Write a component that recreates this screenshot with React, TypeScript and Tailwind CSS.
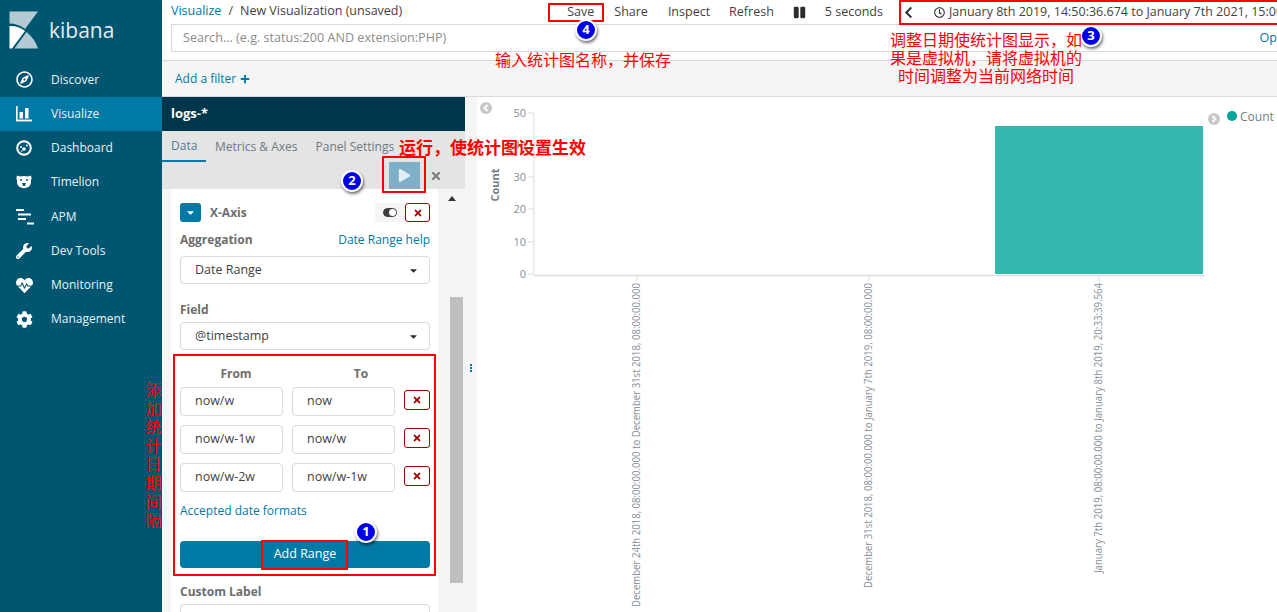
import { FaRegCompass, FaRegClock, FaWrench, FaHeartbeat, FaCog, FaPlay, FaTimes, FaCaretDown, FaChevronLeft, FaPause, FaPlus } from "react-icons/fa";

function VisualizeIcon() {
  return (
    <svg width="16" height="16" viewBox="0 0 16 16" fill="white">
      <rect x="0" y="0" width="1.6" height="15" />
      <rect x="0" y="13.6" width="16" height="1.8" />
      <rect x="3.5" y="6" width="3.5" height="6.5" />
      <rect x="9" y="2" width="3.5" height="10.5" />
    </svg>
  );
}

function DashboardIcon() {
  return (
    <svg width="16" height="16" viewBox="0 0 16 16" fill="white">
      <circle cx="8" cy="8" r="6.8" fill="none" stroke="white" strokeWidth="2" />
      <circle cx="8" cy="9" r="1.8" />
      <circle cx="5" cy="7" r="1" />
      <circle cx="10.8" cy="5.5" r="1" />
      <circle cx="5.8" cy="11" r="0.8" />
    </svg>
  );
}

function TimelionIcon() {
  return (
    <svg width="16" height="14" viewBox="0 0 16 14">
      <path d="M1.5 0.5 L4 1.5 Q8 0.5 12 1.5 L14.5 0.5 Q16.5 2.5 15 5 Q15.5 11 11 12.5 Q8 14 5 12.5 Q0.5 11 1 5 Q-0.5 2.5 1.5 0.5 Z" fill="white" />
      <circle cx="5" cy="5" r="1" fill="#005571" />
      <circle cx="11" cy="5" r="1" fill="#005571" />
      <path d="M6 8 H10 L9 11 H7 Z" fill="#005571" />
    </svg>
  );
}

function ApmIcon() {
  return (
    <svg width="18" height="16" viewBox="0 0 18 16" fill="white">
      <rect x="0" y="0" width="8" height="2" />
      <rect x="2" y="4.5" width="13" height="2" />
      <rect x="2" y="9" width="8" height="2" />
      <rect x="11" y="13.5" width="7" height="2" />
    </svg>
  );
}

function LogoMark() {
  return (
    <svg width="30" height="38" viewBox="0 0 30 38" className="shrink-0">
      <path d="M0.5 0.5 H29 L16 18 Q9 12.5 0.5 12.5 Z" fill="#b4cbd3" />
      <path d="M0.5 15 Q9 14.5 16 20 L3 37.5 H0.5 Z" fill="#ffffff" />
      <path d="M17.5 21 Q26 28 29 37.5 H5.5 Z" fill="#b4cbd3" />
    </svg>
  );
}

const navItems = [
  { name: "Discover", icon: <FaRegCompass size={17} color="white" /> },
  { name: "Visualize", icon: <VisualizeIcon />, active: true },
  { name: "Dashboard", icon: <DashboardIcon /> },
  { name: "Timelion", icon: <TimelionIcon /> },
  { name: "APM", icon: <ApmIcon /> },
  { name: "Dev Tools", icon: <FaWrench size={16} color="white" /> },
  { name: "Monitoring", icon: <FaHeartbeat size={17} color="white" /> },
  { name: "Management", icon: <FaCog size={17} color="white" /> },
];

function Sidebar() {
  return (
    <aside className="w-[162px] shrink-0 h-full bg-[#005571] text-white">
      <div className="h-[62.8px] pl-[9px] pt-[11px] flex items-start gap-[10px]">
        <LogoMark />
        <span className="text-[21px] leading-[38px] text-[#e6eef1]">kibana</span>
      </div>
      {navItems.map((item) => (
        <div
          key={item.name}
          className={`h-[34.2px] flex items-center text-[12px] ${item.active ? "bg-[#0079a5]" : ""}`}
        >
          <span className="w-[51px] pl-[16px] shrink-0 flex items-center">{item.icon}</span>
          <span className="text-[#e9f2f5]">{item.name}</span>
        </div>
      ))}
    </aside>
  );
}

function TopBar() {
  return (
    <div className="h-[97px] shrink-0 flex flex-col border-b border-[#d9d9d9]">
      <div className="h-[24px] flex items-center pl-[9px] text-[12.5px] text-[#3f3f3f] whitespace-nowrap overflow-hidden">
        <div className="flex items-center shrink-0 mb-[1px]">
          <span className="text-[#0079a5]">Visualize</span>
          <span className="mx-[7px]">/</span>
          <span>New Visualization (unsaved)</span>
        </div>
        <div className="flex items-center shrink-0 mt-[1px] ml-[165px]">
          <span>Save</span>
          <span className="ml-[20px]">Share</span>
          <span className="ml-[20px]">Inspect</span>
          <span className="ml-[19px]">Refresh</span>
          <FaPause size={13} className="ml-[19px] text-[#2d2d2d] shrink-0" />
          <span className="ml-[19px]">5 seconds</span>
          <FaChevronLeft size={13} className="ml-[19px] text-[#2d2d2d] shrink-0" />
          <FaRegClock size={11} className="ml-[19px] text-[#2d2d2d] shrink-0" />
          <span className="ml-[4px]">January 8th 2019, 14:50:36.674 to January 7th 2021, 15:00:00.000</span>
        </div>
      </div>
      <div className="h-[28px] ml-[9px] -mr-[2px] border border-[#d9d9d9] flex items-center pl-[11px] pr-[1px] text-[12.6px] text-[#8c8c8c] justify-between whitespace-nowrap">
        <span>Search... (e.g. status:200 AND extension:PHP)</span>
        <span className="text-[#0079a5]">Op</span>
      </div>
      <div className="h-[8px] shrink-0"></div>
      <div className="flex-1 bg-[#f5f5f5] border-t border-[#d9d9d9] flex items-center pl-[13px] text-[12px] text-[#0079a5] gap-[4px]">
        <span>Add a filter</span>
        <FaPlus size={10} />
      </div>
    </div>
  );
}

function DangerButton({ className }: { className: string }) {
  return (
    <span className={`flex items-center justify-center bg-white border border-[#a30000] rounded-[3px] text-[#a30000] shrink-0 ${className}`}>
      <FaTimes size={10} />
    </span>
  );
}

function SelectBox({ label }: { label: string }) {
  return (
    <div className="h-[28px] border border-[#d9d9d9] rounded-[4px] flex items-center justify-between pl-[14px] pr-[10px] text-[12.5px] text-[#3f3f3f]">
      <span>{label}</span>
      <FaCaretDown size={11} className="text-[#2d2d2d]" />
    </div>
  );
}

function RangeInput({ value }: { value: string }) {
  return (
    <div className="w-[103px] h-[29px] border border-[#d9d9d9] rounded-[4px] flex items-center pl-[14px] text-[12.5px] text-[#3f3f3f] shrink-0">
      {value}
    </div>
  );
}

const ranges = [
  ["now/w", "now"],
  ["now/w-1w", "now/w"],
  ["now/w-2w", "now/w-1w"],
];

function EditorPanel() {
  return (
    <div className="w-[303px] shrink-0 h-full flex flex-col">
      <div className="h-[34px] shrink-0 bg-[#00364b] text-white font-bold text-[13px] flex items-center pl-[9px]">logs-*</div>
      <div className="h-[31px] shrink-0 bg-[#e4e4e4] flex items-end text-[12px] text-[#6f7a80] whitespace-nowrap">
        <span className="w-[44px] h-[31px] pl-[9px] pt-[1px] flex items-center border-b-2 border-[#0079a5] text-[#4d7f92]">Data</span>
        <span className="h-[31px] pt-[1px] ml-[9px] flex items-center">Metrics &amp; Axes</span>
        <span className="h-[31px] pt-[1px] ml-[18px] flex items-center">Panel Settings</span>
      </div>
      <div className="h-[27px] shrink-0 bg-[#e4e4e4] flex items-stretch justify-end pr-[14px]">
        <span className="w-[31px] bg-[#7eb0c7] flex items-center justify-center text-white">
          <FaPlay size={13} className="text-[#e3eff4]" />
        </span>
        <span className="w-[31px] flex items-center justify-center text-[#7f7f7f]">
          <FaTimes size={12} />
        </span>
      </div>
      <div className="flex-1 min-h-0 bg-[#f5f5f5] flex">
        <div className="w-[267px] ml-[9px] h-full bg-white pl-[9px] pr-[8px] pt-[14px] shrink-0">
          <div className="h-[19px] flex items-center">
            <span className="w-[21px] h-[19px] rounded-[3px] bg-[#0079a5] flex items-center justify-center text-white">
              <FaCaretDown size={11} />
            </span>
            <span className="ml-[9px] text-[12px] font-bold text-[#6d6d6d]">X-Axis</span>
            <span className="ml-auto w-[30px] h-[19px] bg-[#f5f5f5] rounded-l-[3px] flex items-center justify-center">
              <span className="w-[14px] h-[9px] rounded-full border border-[#3f3f3f] bg-[#3f3f3f] flex justify-end">
                <span className="w-[7px] h-[7px] rounded-full bg-white"></span>
              </span>
            </span>
            <DangerButton className="w-[25px] h-[19px]" />
          </div>
          <div className="mt-[10px] h-[16px] flex justify-between items-center text-[12px] whitespace-nowrap">
            <span className="font-bold text-[#6d6d6d]">Aggregation</span>
            <span className="text-[#0079a5]">Date Range help</span>
          </div>
          <div className="mt-[8px]">
            <SelectBox label="Date Range" />
          </div>
          <div className="mt-[18px] h-[16px] flex items-center text-[12px] font-bold text-[#6d6d6d]">Field</div>
          <div className="mt-[4px]">
            <SelectBox label="@timestamp" />
          </div>
          <div className="mt-[16px] flex text-[12px] font-bold text-[#6d6d6d] h-[16px] items-center">
            <span className="w-[112px] text-center">From</span>
            <span className="w-[138px] text-center">To</span>
          </div>
          <div className="mt-[5px] flex flex-col gap-[9px]">
            {ranges.map(([from, to]) => (
              <div key={from} className="flex items-start">
                <RangeInput value={from} />
                <span className="ml-[9px]">
                  <RangeInput value={to} />
                </span>
                <DangerButton className="w-[26px] h-[20px] ml-[9px] mt-[3px]" />
              </div>
            ))}
          </div>
          <div className="mt-[11px] h-[16px] flex items-center text-[12px] text-[#0079a5]">Accepted date formats</div>
          <div className="mt-[22px] h-[27px] bg-[#0079a5] rounded-[4px] flex items-center justify-center text-[12.5px] text-white">Add Range</div>
          <div className="mt-[16px] h-[16px] flex items-center text-[12px] font-bold text-[#6d6d6d]">Custom Label</div>
          <div className="mt-[4px] h-[28px] border border-[#d9d9d9] rounded-[4px]"></div>
        </div>
        <div className="flex-1 relative">
          <div className="w-0 h-0 mx-auto mt-[7px] border-x-[4px] border-x-transparent border-b-[5px] border-b-[#333333]"></div>
          <div className="mt-[96px] ml-[12px] w-[13px] h-[286px] bg-[#bfbfbf]"></div>
        </div>
      </div>
    </div>
  );
}

function ChartSvg() {
  const yTicks = [
    { label: "50", y: 16 },
    { label: "40", y: 48 },
    { label: "30", y: 80 },
    { label: "20", y: 112 },
    { label: "10", y: 145 },
    { label: "0", y: 177 },
  ];
  const xTicks = [
    { x: 160, len: 324, label: "December 24th 2018, 08:00:00.000 to December 31st 2018, 08:00:00.000" },
    { x: 392, len: 305, label: "December 31st 2018, 08:00:00.000 to January 7th 2019, 08:00:00.000" },
    { x: 622, len: 290, label: "January 7th 2019, 08:00:00.000 to January 8th 2019, 20:33:39.564" },
  ];
  return (
    <svg width="800" height="515" viewBox="0 0 800 515" className="block">
      <text x="22" y="88" transform="rotate(-90 22 88)" textAnchor="middle" fontSize="11" fontWeight="700" fill="#6f7f8a">Count</text>
      <line x1="57" y1="16" x2="57" y2="178" stroke="#dddddd" />
      <line x1="57" y1="178.5" x2="728" y2="178.5" stroke="#dddddd" strokeWidth="1.5" />
      {yTicks.map((t) => (
        <g key={t.label}>
          <line x1="51" x2="57" y1={t.y} y2={t.y} stroke="#dddddd" />
          <text x="49" y={t.y + 4} textAnchor="end" fontSize="11" fill="#848e96">{t.label}</text>
        </g>
      ))}
      <rect x="518" y="29" width="208" height="148" fill="#32b8ae" />
      {xTicks.map((t) => (
        <g key={t.x}>
          <line x1={t.x} x2={t.x} y1="178" y2="184" stroke="#dddddd" />
          <text
            transform={`translate(${t.x + 3} 186) rotate(-90)`}
            textAnchor="end"
            fontSize="10"
            fill="#848e96"
            textLength={t.len}
            lengthAdjust="spacingAndGlyphs"
          >
            {t.label}
          </text>
        </g>
      ))}
      <circle cx="9" cy="11" r="6" fill="#c8c8c8" />
      <path d="M10.5 8 L7.5 11 L10.5 14" fill="none" stroke="white" strokeWidth="1.8" />
      <circle cx="737" cy="22" r="6" fill="#c8c8c8" />
      <path d="M735.5 19 L738.5 22 L735.5 25" fill="none" stroke="white" strokeWidth="1.8" />
      <circle cx="755" cy="19" r="5" fill="#00a69b" />
      <text x="763" y="24" fontSize="12" fill="#6f7f8a">Count</text>
    </svg>
  );
}

function Badge({ n, className }: { n: number; className: string }) {
  return (
    <span
      className={`absolute w-[22px] h-[22px] rounded-full bg-[#0000e6] border-2 border-white shadow-[1px_2px_3px_rgba(0,0,0,0.55)] flex items-center justify-center text-white text-[13px] font-bold ${className}`}
    >
      {n}
    </span>
  );
}

const redText = "absolute text-[#ff0000] font-['Noto_Sans_CJK_SC',sans-serif]";

function Annotations() {
  return (
    <>
      <span className="absolute left-[548px] top-[3px] w-[56px] h-[19px] border-2 border-[#ff0000]"></span>
      <span className="absolute left-[899px] top-0 w-[390px] h-[25px] border-2 border-[#ff0000]"></span>
      <span className="absolute left-[382px] top-[156px] w-[44px] h-[37px] border-2 border-[#ff0000]"></span>
      <span className="absolute left-[173px] top-[354px] w-[263px] h-[222px] border-2 border-[#ff0000]"></span>
      <span className="absolute left-[261px] top-[540px] w-[87px] h-[30px] border-2 border-[#ff0000]"></span>
      <Badge n={1} className="left-[355px] top-[521px]" />
      <Badge n={2} className="left-[341px] top-[170px]" />
      <Badge n={3} className="left-[1080px] top-[25px]" />
      <Badge n={4} className="left-[575px] top-[19px]" />
      <span className={`${redText} left-[495px] top-[47px] text-[16px] leading-[24px] whitespace-nowrap`}>输入统计图名称，并保存</span>
      <span className={`${redText} left-[399px] top-[135px] text-[17px] leading-[24px] font-bold whitespace-nowrap`}>运行，使统计图设置生效</span>
      <div className={`${redText} left-[886px] top-[30px] w-[200px] text-center text-[16px] leading-[18px]`}>
        <div>调整日期使统计图显示，如</div>
        <div>果是虚拟机，请将虚拟机的</div>
        <div>时间调整为当前网络时间</div>
      </div>
      <div className={`${redText} left-[145px] top-[380px] w-[17px] text-[16px] leading-[18.6px] text-center`}>
        {"添加统计日期间隔".split("").map((c, i) => (
          <div key={i}>{c}</div>
        ))}
      </div>
    </>
  );
}

export default function App() {
  return (
    <div className="relative w-[1277px] h-[612px] overflow-hidden bg-white flex font-['Open_Sans',sans-serif]">
      <Sidebar />
      <div className="flex-1 min-w-0 flex flex-col">
        <TopBar />
        <div className="flex-1 min-h-0 flex">
          <EditorPanel />
          <div className="w-[12px] shrink-0 bg-[#f5f5f5] flex flex-col items-center pt-[267px] gap-[1px]">
            <span className="w-[2px] h-[2px] bg-[#0079a5]"></span>
            <span className="w-[2px] h-[2px] bg-[#0079a5]"></span>
            <span className="w-[2px] h-[2px] bg-[#0079a5]"></span>
          </div>
          <div className="flex-1 min-w-0 overflow-hidden">
            <ChartSvg />
          </div>
        </div>
      </div>
      <Annotations />
    </div>
  );
}
